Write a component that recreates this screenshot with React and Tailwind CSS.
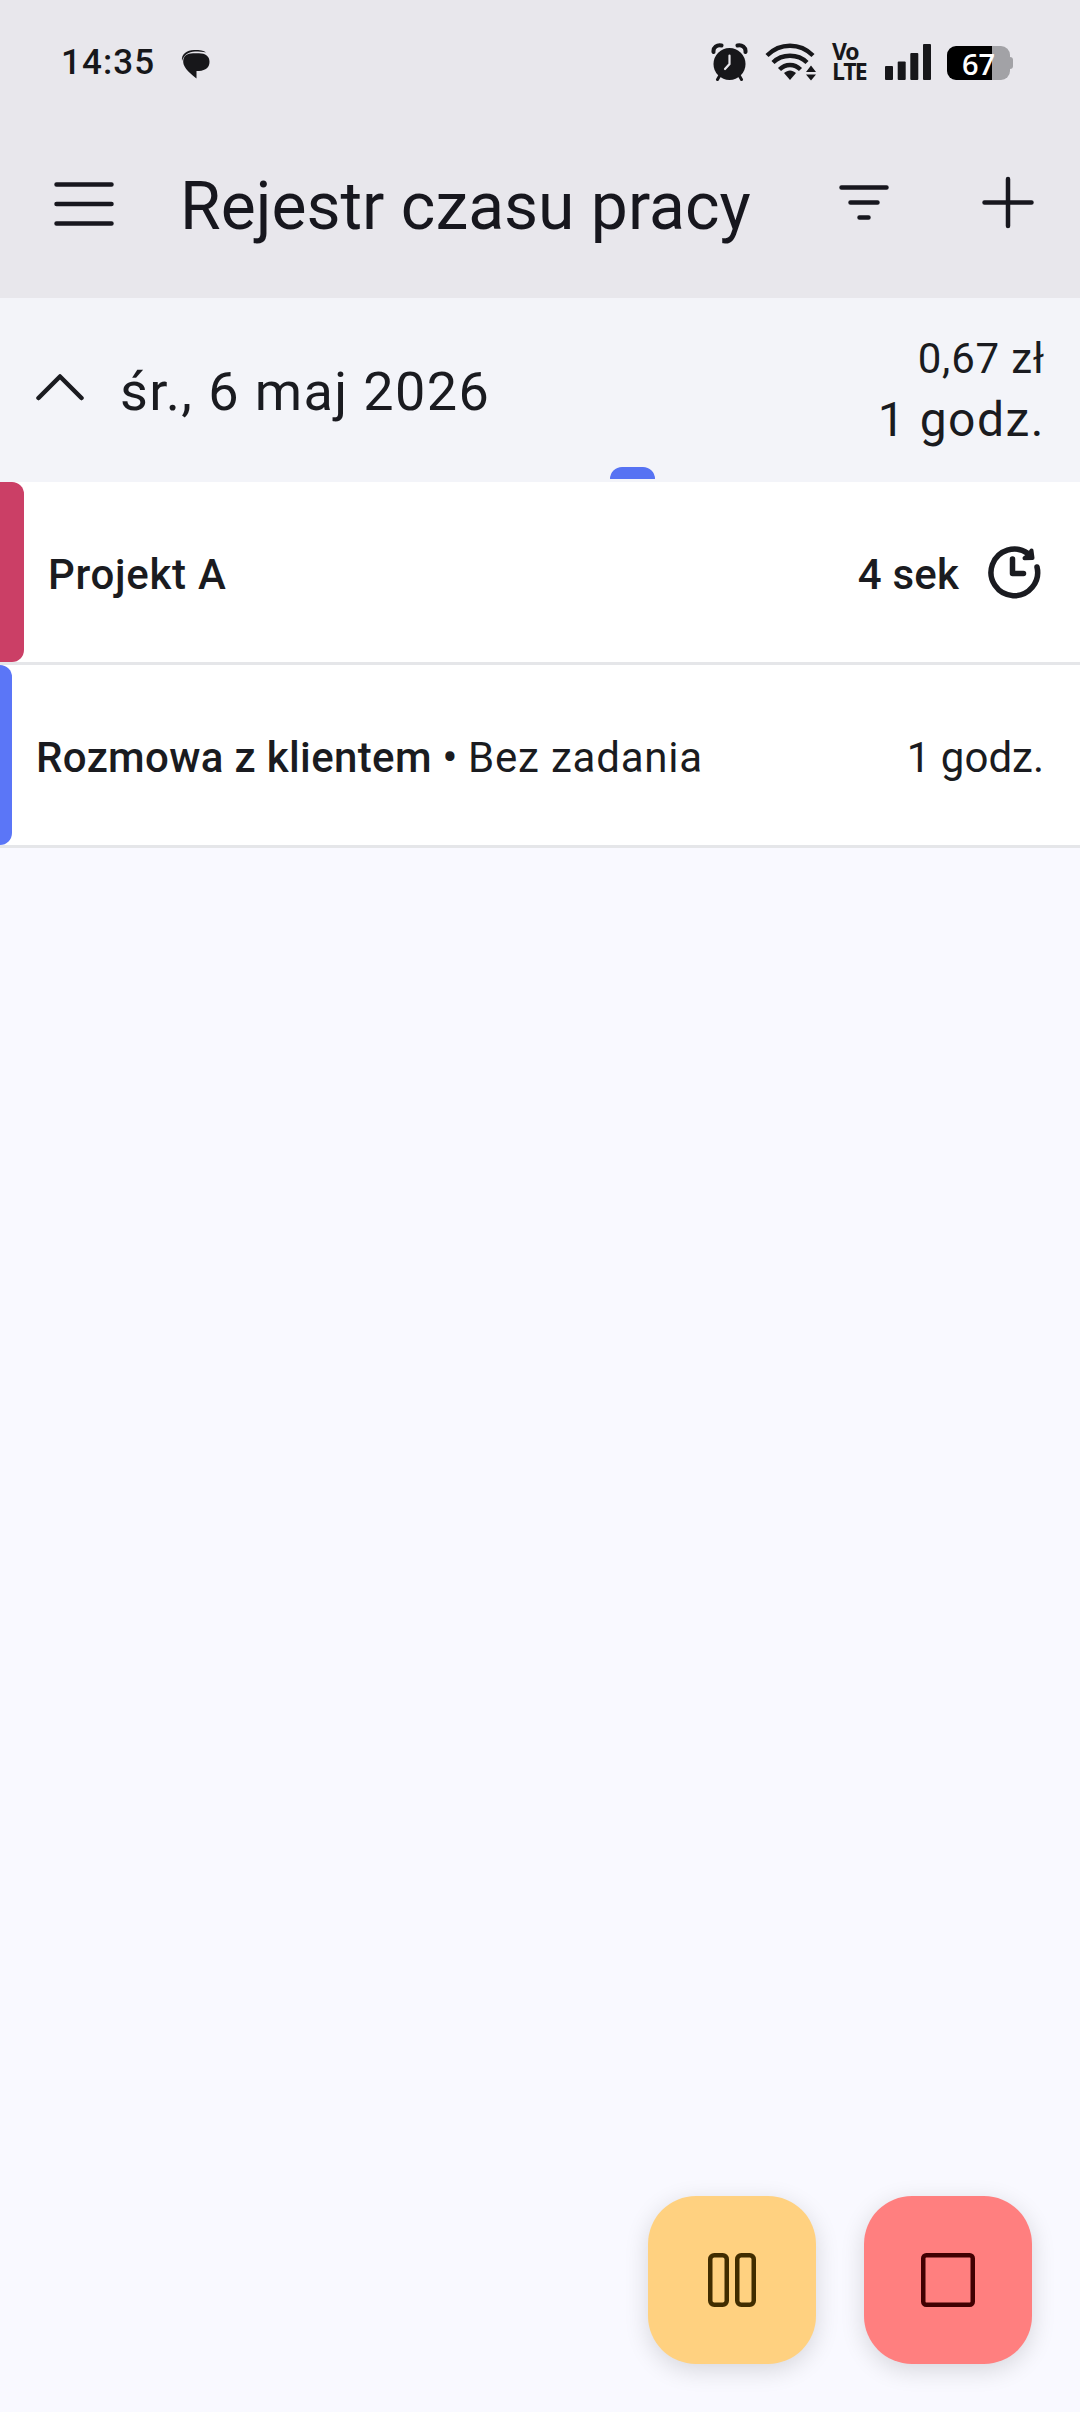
const entries = [
  {
    id: 1,
    project: 'Projekt A',
    task: null,
    duration: '4 sek',
    running: true,
    stripe: 'w-6 bg-[#cb3f66]',
    tracking: 'tracking-[0.7px]',
  },
  {
    id: 2,
    project: 'Rozmowa z klientem',
    task: 'Bez zadania',
    duration: '1 godz.',
    running: false,
    stripe: 'w-3 bg-[#5b76f7]',
    tracking: 'tracking-[0.35px]',
  },
]

function StatusBar() {
  return (
    <div className="flex h-[122px] items-center pl-[61px] pr-[67px] text-[#17171a]">
      <span className="mt-[3px] text-[35px] font-medium leading-none tracking-[1.1px]">14:35</span>
      <svg className="ml-[26px] mt-[5px]" width="30" height="30" viewBox="0 0 30 30" fill="currentColor">
        <path d="M1 12C0 5 6 1 13 1c6 0 10 .5 12 2.500-3-.8-7-1-11-1C7.500 2.500 3 6 1 12z" />
        <path d="M12 4.300h6c6.500 0 10.500 3 10.500 8.500S25 21.500 18 22h-2.500v7.500C11 26 2.200 19 2.200 13S6 4.300 12 4.300z" />
      </svg>

      <div className="ml-auto flex items-center">
        {/* alarm */}
        <svg className="mt-[2px]" width="38" height="38" viewBox="0 0 38 38" fill="none" stroke="currentColor">
          <circle cx="18.500" cy="21" r="16" fill="currentColor" stroke="none" />
          <path d="M2.500 9C2 4.500 6 1.500 10.500 2.500M34.500 9C35 4.500 31 1.500 26.500 2.500" strokeWidth="4" strokeLinecap="round" />
          <path d="M8.500 33l-2 3.500M28.500 33l2 3.500" strokeWidth="3" strokeLinecap="round" />
          <path d="M18.500 12.500V21L14 26" stroke="#e8e7ec" strokeWidth="2.200" strokeLinecap="round" />
        </svg>
        {/* wifi with traffic arrows */}
        <svg className="ml-[16px] mt-[2px]" width="51" height="38" viewBox="0 0 51 38" fill="none" stroke="currentColor" strokeWidth="4.300">
          <path d="M2 12.500C15-.5 35-.5 48 12.500M8 19.500C17 10.500 33 10.500 42 19.500M14.500 26.500c6-6 15-6 21 0" />
          <path d="M19 30c4-3.500 8-3.500 12 0l-6 7z" fill="currentColor" stroke="none" />
          <path d="M41 29l5-6.500 5 6.500zM41 31.500l5 6 5-6z" fill="currentColor" stroke="none" />
        </svg>
        <span className="ml-[16px] w-[35px] whitespace-pre font-['Open_Sans',sans-serif] text-[23px] font-bold leading-[20px] tracking-[-1.8px]">
          {'Vo\nLTE'}
        </span>
        <svg className="ml-[18px]" width="47" height="38" viewBox="0 0 47 38" fill="currentColor">
          <rect x="0" y="24" width="8" height="14" rx="1" />
          <rect x="12.700" y="19.500" width="8" height="18.500" rx="1" />
          <rect x="25.300" y="11" width="8" height="27" rx="1" />
          <rect x="38" y="2" width="8" height="36" rx="1" />
        </svg>
        <div className="ml-[15px] mt-[4px] flex items-center">
          <div className="flex h-[34px] w-[63px] items-center justify-center rounded-[9px] bg-[linear-gradient(to_right,#000_45px,#a2a2a6_45px)] font-['Open_Sans',sans-serif] text-[29px] font-semibold leading-none text-white">
            67
          </div>
          <div className="h-3 w-[3px] rounded-r-sm bg-[#a2a2a6]" />
        </div>
      </div>
    </div>
  )
}

function Toolbar() {
  return (
    <div className="flex h-[164px] items-center pl-[54px] pr-[46px] text-[#17171e]">
      <button>
        <svg width="60" height="50" viewBox="0 0 60 50" stroke="currentColor" strokeWidth="4.500" strokeLinecap="round">
          <path d="M2.500 5.500h55M2.500 25h55M2.500 44.500h55" />
        </svg>
      </button>
      <h1 className="ml-[66px] mt-[5px] whitespace-nowrap text-[66px] leading-none">Rejestr czasu pracy</h1>
      <button className="ml-auto">
        <svg width="50" height="44" viewBox="0 0 50 44" stroke="currentColor" strokeWidth="4.500" strokeLinecap="round">
          <path d="M2.500 5.500h45M11.500 20.500h27M20.500 35.500h9" />
        </svg>
      </button>
      <button className="ml-[93px]">
        <svg width="52" height="56" viewBox="0 0 52 56" stroke="currentColor" strokeWidth="4.500" strokeLinecap="round">
          <path d="M2.500 26.500h47M26 3v47" />
        </svg>
      </button>
    </div>
  )
}

function DayHeader() {
  return (
    <div className="relative flex h-[184px] items-center bg-[#f3f4f9] pl-[36px] pr-[35px]">
      <svg className="-mt-1.5" width="48" height="28" viewBox="0 0 48 28" fill="none" stroke="currentColor" strokeWidth="4.500" strokeLinecap="round" strokeLinejoin="round">
        <path d="M2.500 25L24 3.500 45.500 25" />
      </svg>
      <span className="ml-[36px] mt-[3px] text-[54px] leading-none tracking-[1.4px]">śr., 6 maj 2026</span>
      <div className="ml-auto mt-[1px] flex flex-col items-end">
        <span className="text-[42px] leading-[58px] tracking-[0.8px]">0,67 zł</span>
        <span className="text-[48px] leading-[64px] tracking-[1.5px]">1 godz.</span>
      </div>
      {/* marker of the entry on the day's timeline */}
      <div className="absolute bottom-[3px] left-[610px] h-3 w-[45px] rounded-t-xl bg-[#5672f3]" />
    </div>
  )
}

function ClockIcon() {
  return (
    <svg className="-mt-[6px] ml-[28px] mr-[3px]" width="54" height="54" viewBox="0 0 54 54" fill="none" stroke="currentColor" strokeWidth="5.500" strokeLinecap="round" strokeLinejoin="round">
      <path d="M50 22A23.300 23.300 0 1 1 41 8.500" />
      <path d="M44.500 5.500l1 7.500-8 .2 4-3z" fill="currentColor" strokeWidth="4" />
      <path d="M25.500 14v14.500h11" />
    </svg>
  )
}

function EntryRow({ entry }) {
  return (
    <div className="flex h-[183px] border-b-[3px] border-[#e5e6e9] bg-white">
      <div className={`h-[180px] rounded-r-xl ${entry.stripe}`} />
      <div className="flex flex-1 items-center pl-6 pr-[36px] pt-[5px] text-[42px] leading-none">
        <span className={`font-medium ${entry.tracking}`}>{entry.project}</span>
        {entry.task && (
          <span className="whitespace-pre tracking-[0.8px]">
            <span className="font-medium tracking-[0.2px]"> • </span>
            {entry.task}
          </span>
        )}
        <span className={entry.running ? 'ml-auto font-medium tracking-[0.2px]' : 'ml-auto'}>
          {entry.duration}
        </span>
        {entry.running && <ClockIcon />}
      </div>
    </div>
  )
}

export default function App() {
  return (
    <div className="flex h-[2412px] w-[1080px] flex-col bg-[#f9f9ff] font-[Roboto,sans-serif] text-[#1a1b20]">
      <header className="h-[298px] bg-[#e8e7ec]">
        <StatusBar />
        <Toolbar />
      </header>

      <main>
        <DayHeader />
        {entries.map((entry) => (
          <EntryRow key={entry.id} entry={entry} />
        ))}
      </main>

      <div className="mb-12 mr-12 mt-auto flex justify-end gap-12">
        <button className="flex size-[168px] items-center justify-center rounded-[48px] bg-[#ffd180] shadow-[0_6px_24px_rgba(0,0,0,0.14)]">
          <svg width="48" height="54" viewBox="0 0 48 54" fill="none" stroke="#412d00" strokeWidth="4.500">
            <rect x="2.250" y="2.250" width="16.500" height="49.500" rx="4" />
            <rect x="29.250" y="2.250" width="16.500" height="49.500" rx="4" />
          </svg>
        </button>
        <button className="flex size-[168px] items-center justify-center rounded-[48px] bg-[#ff7f7f] shadow-[0_6px_24px_rgba(0,0,0,0.14)]">
          <svg width="54" height="54" viewBox="0 0 54 54" fill="none" stroke="#410002" strokeWidth="4.500">
            <rect x="2.250" y="2.250" width="49.500" height="49.500" rx="3" />
          </svg>
        </button>
      </div>
    </div>
  )
}
